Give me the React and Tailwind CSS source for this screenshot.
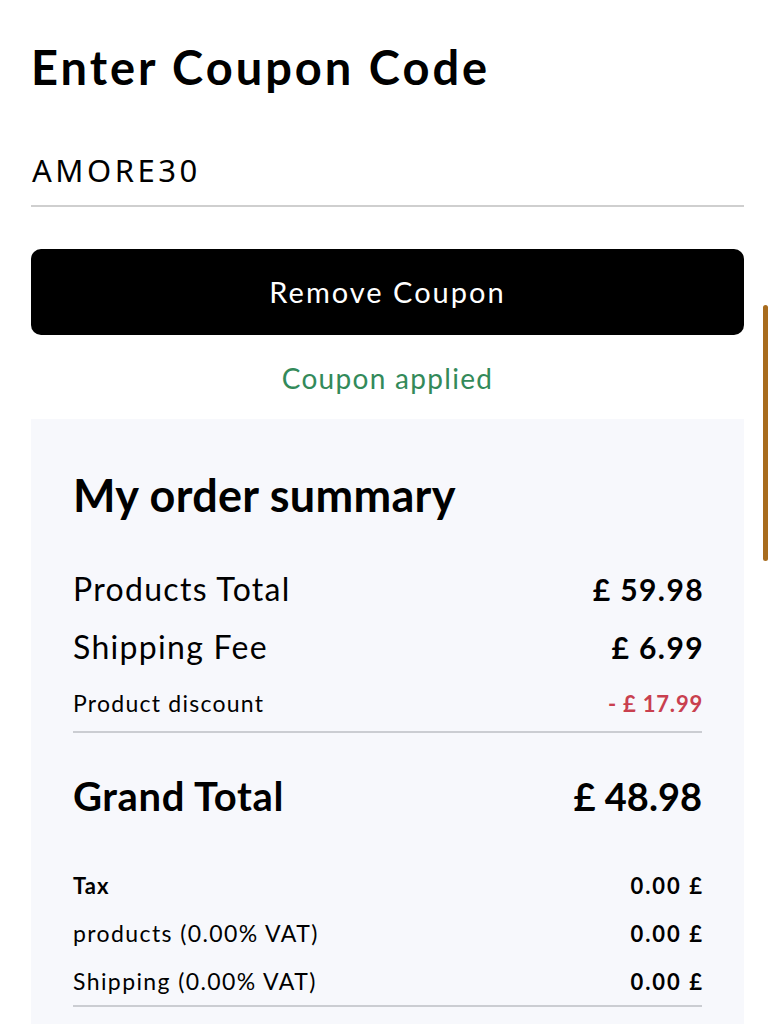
import React from 'react';

const rows = [
  { label: 'Products Total', value: '£ 59.98' },
  { label: 'Shipping Fee', value: '£ 6.99' },
];

const taxRows = [
  { label: 'products (0.00% VAT)', value: '0.00 £' },
  { label: 'Shipping (0.00% VAT)', value: '0.00 £' },
];

export default function App() {
  return (
    <div className="relative min-h-[1024px] bg-white text-black overflow-hidden" style={{ fontFamily: 'Lato, "Noto Sans", sans-serif' }}>
      <div className="pl-[31px] pr-[30px] pt-[38px]">
        <h1 className="text-[47px] font-bold leading-[58px] tracking-[3px]">Enter Coupon Code</h1>

        <div className="mt-[56px] border-b-2 border-[#cfcfcf] pb-[17px]">
          <div className="text-[31px] leading-[36px] pl-px tracking-[3.5px]" style={{ fontFamily: '"Noto Sans", sans-serif' }}>AMORE30</div>
        </div>

        <button className="mt-[42px] w-full h-[86px] rounded-[10px] bg-black text-white text-[29px] font-normal tracking-[2px]">
          Remove Coupon
        </button>

        <p className="mt-[26px] text-center text-[28px] leading-[34px] font-normal tracking-[1.3px] text-[#338a5a]">Coupon applied</p>

        <div className="mt-[24px] bg-[#f7f8fc] px-[42px] pt-[48px] pb-[40px]">
          <h2 className="text-[45px] font-bold leading-[56px] tracking-[0.3px]">My order summary</h2>

          <div className="mt-[39px] flex flex-col gap-[4px]">
            {rows.map((r) => (
              <div key={r.label} className="flex justify-between items-center h-[54px]">
                <span className="text-[32px] tracking-[1.3px]">{r.label}</span>
                <span className="text-[30px] font-bold tracking-[1.4px] -mr-[2px]">{r.value}</span>
              </div>
            ))}
            <div className="flex justify-between items-center h-[50px]">
              <span className="text-[23px] tracking-[1.25px]">Product discount</span>
              <span className="text-[22px] font-bold tracking-[0.8px] -mr-[1px] text-[#c9404f]">- £ 17.99</span>
            </div>
          </div>

          <div className="mt-[3px] border-t-2 border-[#cbcdd2]" />

          <div className="mt-[36px] flex justify-between items-center h-[54px]">
            <span className="text-[40px] font-bold tracking-[0.6px]">Grand Total</span>
            <span className="text-[38px] font-bold">£ 48.98</span>
          </div>

          <div className="mt-[38px] flex flex-col">
            <div className="flex justify-between items-center h-[48px]">
              <span className="text-[22px] font-bold tracking-[1px]">Tax</span>
              <span className="text-[22px] font-bold tracking-[2px] -mr-[2px]">0.00 £</span>
            </div>
            {taxRows.map((r) => (
              <div key={r.label} className="flex justify-between items-center h-[48px]">
                <span className="text-[23px] tracking-[1.4px]">{r.label}</span>
                <span className="text-[22px] font-bold tracking-[2px] -mr-[2px]">{r.value}</span>
              </div>
            ))}
          </div>

          <div className="mt-0 border-t-2 border-[#cbcdd2]" />
        </div>
      </div>

      {/* overlay scrollbar */}
      <div className="absolute left-[763px] top-[305px] w-[5px] h-[256px] rounded-full bg-[#a86c1e]" />
    </div>
  );
}
